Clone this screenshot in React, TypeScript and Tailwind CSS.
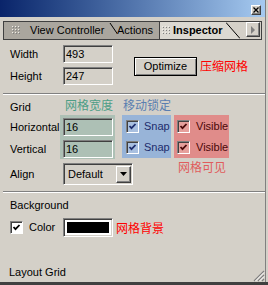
import React from 'react';

const sunken =
  'border border-t-[#808080] border-l-[#808080] border-b-white border-r-white shadow-[inset_1px_1px_0_#404040]';
const raised =
  'border border-t-white border-l-white border-b-[#404040] border-r-[#404040] shadow-[inset_-1px_-1px_0_#808080]';
const cjk = "font-['Noto_Sans_CJK_SC',sans-serif] text-[12px] leading-[16px]";

function Grip() {
  // little dotted handle at the start of a tab
  const dots = [];
  for (let r = 0; r < 3; r++) {
    for (let c = 0; c < 3; c++) {
      dots.push(<rect key={`${r}${c}`} x={c * 3} y={r * 3} width="1" height="1" fill="#f0eee8" />);
      dots.push(<rect key={`s${r}${c}`} x={c * 3 + 1} y={r * 3 + 1} width="1" height="1" fill="#808080" />);
    }
  }
  return (
    <svg width="9" height="9" className="shrink-0">
      {dots}
    </svg>
  );
}

function Check({ box, tick }: { box: string; tick: string }) {
  return (
    <div className={`w-[13px] h-[13px] shrink-0 flex items-center justify-center ${sunken} ${box}`}>
      <svg width="9" height="9" viewBox="0 0 9 9">
        <polyline points="1.5,4 3.5,6.2 7.5,2" fill="none" stroke={tick} strokeWidth="1.8" />
      </svg>
    </div>
  );
}

function Separator() {
  return <div className="ml-[3px] h-[2px] border-t border-t-[#808080] border-b border-b-white" />;
}

export default function App() {
  return (
    <div className="w-[268px] h-[285px] bg-[#d4d0c8] flex flex-col font-['Liberation_Sans',Arial,sans-serif] text-[11px] text-black">
      <div className="w-[266px] h-[282px] border-r border-[#808080] flex flex-col">
        {/* Title bar */}
        <div className="h-[17px] bg-gradient-to-r from-[#0a246a] to-[#a6caf0] flex justify-end pt-[5px] pr-[4px]">
          <div className={`w-[10px] h-[10px] bg-[#d4d0c8] ${raised} flex items-center justify-center`}>
            <svg width="6" height="6" viewBox="0 0 6 6">
              <path d="M0.5 0.5 L5.5 5.5 M5.5 0.5 L0.5 5.5" stroke="#000" strokeWidth="1.3" />
            </svg>
          </div>
        </div>

        {/* Tab strip */}
        <div className="mt-[4px] ml-[3px] w-[259px] h-[19px] border border-[#404040] shadow-[inset_1px_1px_0_#808080] flex">
          <div className="w-[106px] bg-[#aaa69e] flex items-center pl-[8px]">
            <Grip />
            <span className="ml-[9px] leading-none">View Controller</span>
          </div>
          <svg width="7" height="17" className="shrink-0 overflow-visible bg-[#aaa69e]">
            <line x1="0" y1="1" x2="9.5" y2="15" stroke="#000" strokeWidth="1" />
          </svg>
          <div className="w-[42px] bg-[#aaa69e] flex items-center">
            <span className="leading-none">Actions</span>
          </div>
          <div className="w-[67px] bg-[#dcd9d2] flex items-center pl-[2px] border-l border-[#404040]">
            <Grip />
            <span className="ml-[2px] font-bold leading-none">Inspector</span>
          </div>
          <svg width="14" height="17" className="shrink-0 bg-[#d4d0c8]">
            <polygon points="0,0 0,17 14,17" fill="#dcd9d2" />
            <line x1="0" y1="0.5" x2="14" y2="16.5" stroke="#000" strokeWidth="1" />
          </svg>
          <div className="flex-1 bg-[#d4d0c8] flex justify-end pr-[1px]">
            <div className={`w-[14px] h-[15px] bg-[#d4d0c8] ${raised} flex items-center justify-center`}>
              <svg width="5" height="8" viewBox="0 0 5 8">
                <polygon points="0,0 4,4 0,8" fill="#808080" />
              </svg>
            </div>
          </div>
        </div>

        {/* Size */}
        <div className="mt-[5px] pl-[10px] flex items-center">
          <div className="flex flex-col gap-[4px]">
            <div className="flex items-center">
              <span className="w-[53px]">Width</span>
              <div className={`w-[50px] h-[18px] ${sunken} pl-[2px] leading-[16px]`}>493</div>
            </div>
            <div className="flex items-center">
              <span className="w-[53px]">Height</span>
              <div className={`w-[50px] h-[18px] ${sunken} pl-[2px] leading-[16px]`}>247</div>
            </div>
          </div>
          <div className="ml-[21px] mt-[2px] w-[63px] h-[19px] border border-black shadow-[inset_1px_1px_0_#fff,inset_-1px_-1px_0_#808080] flex items-center justify-center">
            Optimize
          </div>
          <span className={`ml-[3px] mt-[2px] text-[#ff0000] ${cjk}`}>压缩网格</span>
        </div>

        <div className="mt-[8px]">
          <Separator />
        </div>

        {/* Grid */}
        <div className="h-[18px] mt-[2px] pl-[10px] flex items-start">
          <span className="w-[55px] mt-[2px] leading-[16px]">Grid</span>
          <span className={`w-[58px] text-[#4d9e86] ${cjk}`}>网格宽度</span>
          <span className={`text-[#5a7eb0] ${cjk}`}>移动锁定</span>
        </div>

        <div className="h-[44px] pl-[10px] flex">
          <div className="w-[50px] flex flex-col pt-[3px] gap-[4px]">
            <div className="h-[18px] flex items-center pt-[1px]">Horizontal</div>
            <div className="h-[18px] flex items-center pt-[1px]">Vertical</div>
          </div>
          <div className="w-[55px] bg-[#adc0b5] flex flex-col pt-[3px] pl-[3px] gap-[4px]">
            <div className={`w-[50px] h-[18px] ${sunken} pl-[2px] leading-[16px]`}>16</div>
            <div className={`w-[50px] h-[18px] ${sunken} pl-[2px] leading-[16px]`}>16</div>
          </div>
          <div className="ml-[7px] w-[49px] h-[43px] bg-[#98b4d8] flex flex-col text-[#1c2c6c]">
            <div className="h-[22px] flex items-center pl-[4px] pt-[1px]">
              <Check box="bg-[#a9c0e0]" tick="#1c2c6c" />
              <span className="ml-[5px]">Snap</span>
            </div>
            <div className="h-[21px] flex items-center pl-[4px]">
              <Check box="bg-[#a9c0e0]" tick="#1c2c6c" />
              <span className="ml-[5px]">Snap</span>
            </div>
          </div>
          <div className="ml-[3px] w-[55px] h-[43px] bg-[#e08c8a] flex flex-col text-[#4a0808]">
            <div className="h-[22px] flex items-center pl-[3px] pt-[1px]">
              <Check box="bg-[#e6a09c]" tick="#4a0808" />
              <span className="ml-[6px]">Visible</span>
            </div>
            <div className="h-[21px] flex items-center pl-[3px]">
              <Check box="bg-[#e6a09c]" tick="#4a0808" />
              <span className="ml-[6px]">Visible</span>
            </div>
          </div>
        </div>

        <div className="pl-[10px] flex items-start">
          <span className="w-[53px] mt-[4px] leading-[22px]">Align</span>
          <div className={`mt-[4px] w-[70px] h-[22px] ${sunken} flex items-center justify-between pl-[4px] pr-[1px]`}>
            <span>Default</span>
            <div className={`w-[15px] h-[17px] bg-[#d4d0c8] ${raised} flex items-center justify-center`}>
              <svg width="7" height="4" viewBox="0 0 7 4">
                <polygon points="0,0 7,0 3.5,4" fill="#000" />
              </svg>
            </div>
          </div>
          <span className={`ml-[45px] text-[#e05c5c] ${cjk} leading-[14px]`}>网格可见</span>
        </div>

        <div className="mt-[6px]">
          <Separator />
        </div>

        {/* Background */}
        <div className="mt-[5px] pl-[10px] leading-[14px]">Background</div>
        <div className="mt-[6px] h-[19px] pl-[10px] flex items-center">
          <Check box="bg-white" tick="#000" />
          <span className="ml-[6px] w-[34px]">Color</span>
          <div className={`w-[50px] h-[19px] ${sunken} p-[1px]`}>
            <div className="w-full h-full bg-black border-2 border-white" />
          </div>
          <span className={`ml-[3px] text-[#ff0000] ${cjk}`}>网格背景</span>
        </div>

        <div className="flex-1 flex items-end justify-between pl-[9px]">
          <span className="leading-[14px] mb-[3px]">Layout Grid</span>
          <svg width="12" height="12" viewBox="0 0 12 12" className="mb-[0px]">
            <path d="M11 1 L1 11 M11 5 L5 11 M11 9 L9 11" stroke="#808080" strokeWidth="1.2" />
            <path d="M11 2.5 L2.5 11 M11 6.5 L6.5 11" stroke="#fff" strokeWidth="1" />
          </svg>
        </div>
      </div>
      <div className="h-[3px] bg-[#404040]" />
    </div>
  );
}
